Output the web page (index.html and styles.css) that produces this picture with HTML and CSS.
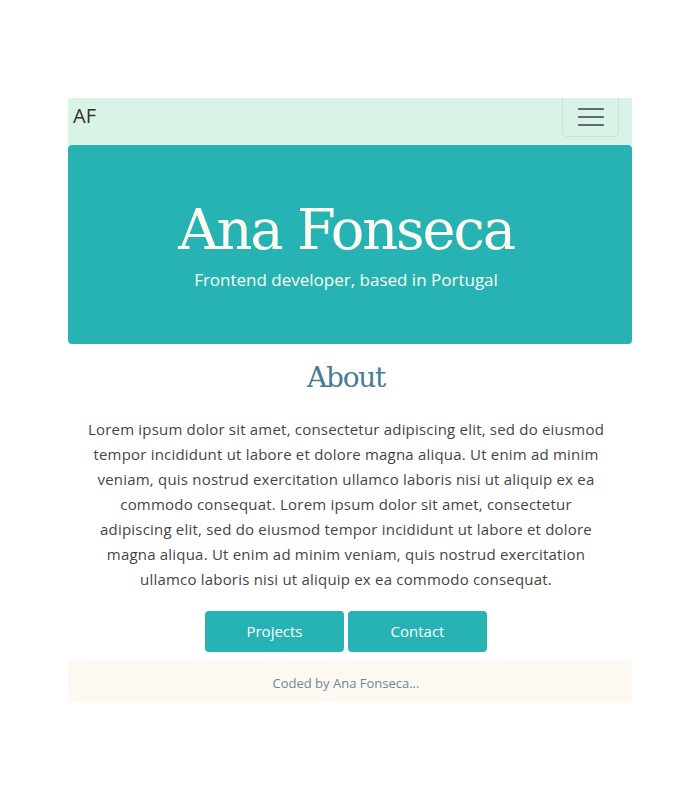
FILE: index.html
```html
<!DOCTYPE html>
<html lang="en">
<head>
<meta charset="utf-8">
<title>Ana Fonseca</title>
<link rel="stylesheet" href="styles.css">
</head>
<body>
<div class="page">
  <nav class="navbar">
    <span class="brand">AF</span>
    <button class="toggler" aria-label="Menu">
      <svg width="26" height="20" viewBox="0 0 26 20"><path d="M1 2h24M1 10h24M1 18h24" stroke="#5f6b66" stroke-width="2.2" stroke-linecap="round"/></svg>
    </button>
  </nav>
  <header class="hero">
    <h1 class="hero-title">Ana Fonseca</h1>
    <p class="hero-sub">Frontend developer, based in Portugal</p>
  </header>
  <section class="about">
    <h2 class="about-title">About</h2>
    <p class="about-text">Lorem ipsum dolor sit amet, consectetur adipiscing elit, sed do eiusmod tempor incididunt ut labore et dolore magna aliqua. Ut enim ad minim veniam, quis nostrud exercitation ullamco laboris nisi ut aliquip ex ea commodo consequat. Lorem ipsum dolor sit amet, consectetur adipiscing elit, sed do eiusmod tempor incididunt ut labore et dolore magna aliqua. Ut enim ad minim veniam, quis nostrud exercitation ullamco laboris nisi ut aliquip ex ea commodo consequat.</p>
    <div class="actions">
      <a class="btn" href="#">Projects</a>
      <a class="btn" href="#">Contact</a>
    </div>
  </section>
  <footer class="footer">Coded by Ana Fonseca...</footer>
</div>
</body>
</html>
```
FILE: styles.css
```css
html, body {
  margin: 0;
  padding: 0;
  background: #ffffff;
}
body {
  font-family: "Open Sans", "DejaVu Sans", sans-serif;
  color: #444444;
}
.page {
  width: 564px;
  margin: 98px auto 0;
}
.navbar {
  height: 47px;
  background: #d9f3e7;
  display: flex;
  align-items: flex-start;
  justify-content: space-between;
}
.brand {
  font-size: 20px;
  color: #333333;
  padding: 6px 0 0 5px;
  line-height: 24px;
}
.toggler {
  width: 57px;
  height: 39px;
  margin: 0 13px 0 0;
  background: transparent;
  border: 1px solid #c8e3d6;
  border-top: none;
  border-radius: 0 0 5px 5px;
  display: flex;
  align-items: center;
  justify-content: center;
  padding: 0;
}
.hero {
  background: #27b3b4;
  border-radius: 4px;
  height: 199px;
  display: flex;
  flex-direction: column;
  align-items: center;
  padding: 50px 8px 0 0;
  box-sizing: border-box;
  color: #fdfaf0;
}
.hero-title {
  margin: 0;
  font-family: "DejaVu Serif", "Liberation Serif", serif;
  font-weight: normal;
  font-size: 56px;
  line-height: 70px;
  letter-spacing: -2.2px;
}
.hero-sub {
  margin: 3px 0 0;
  font-size: 17px;
  line-height: 24px;
}
.about {
  display: flex;
  flex-direction: column;
  align-items: center;
  padding-right: 8px;
}
.about-title {
  margin: 16px 0 0;
  font-family: "DejaVu Serif", "Liberation Serif", serif;
  font-weight: normal;
  font-size: 28px;
  line-height: 36px;
  color: #4a7a94;
  letter-spacing: -1.3px;
}
.about-text {
  margin: 21px 0 0;
  width: 518px;
  text-align: center;
  font-size: 15px;
  line-height: 25px;
  letter-spacing: 0.2px;
  color: #454545;
}
.actions {
  margin-top: 19px;
  display: flex;
  gap: 4px;
}
.btn {
  width: 139px;
  height: 41px;
  background: #27b3b4;
  border-radius: 4px;
  color: #ffffff;
  text-decoration: none;
  font-size: 15px;
  display: flex;
  align-items: center;
  justify-content: center;
  padding-bottom: 1px;
  box-sizing: border-box;
}
.footer {
  margin-top: 9px;
  height: 41px;
  background: #fdf9f0;
  display: flex;
  align-items: center;
  justify-content: center;
  padding: 2px 8px 0 0;
  box-sizing: border-box;
  font-size: 13px;
  color: #6f8796;
}
```
